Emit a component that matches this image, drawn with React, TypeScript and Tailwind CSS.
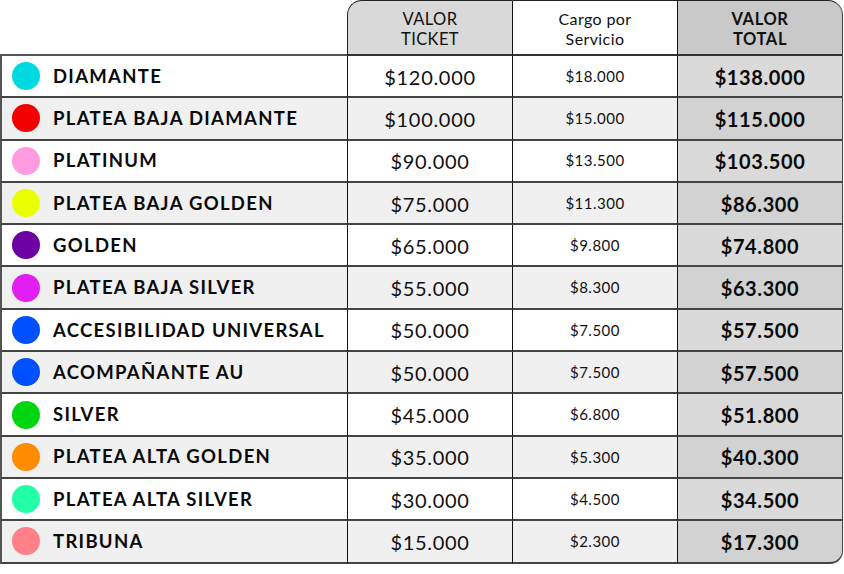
// Ticket price table: sector, base price, service charge and total.
const ROWS = [
  { name: "DIAMANTE", color: "#00d9e2", ticket: "$120.000", fee: "$18.000", total: "$138.000" },
  { name: "PLATEA BAJA DIAMANTE", color: "#f20000", ticket: "$100.000", fee: "$15.000", total: "$115.000" },
  { name: "PLATINUM", color: "#ff9be0", ticket: "$90.000", fee: "$13.500", total: "$103.500" },
  { name: "PLATEA BAJA GOLDEN", color: "#eaff00", ticket: "$75.000", fee: "$11.300", total: "$86.300" },
  { name: "GOLDEN", color: "#6c00a3", ticket: "$65.000", fee: "$9.800", total: "$74.800" },
  { name: "PLATEA BAJA SILVER", color: "#e21ef0", ticket: "$55.000", fee: "$8.300", total: "$63.300" },
  { name: "ACCESIBILIDAD UNIVERSAL", color: "#0050ff", ticket: "$50.000", fee: "$7.500", total: "$57.500" },
  { name: "ACOMPAÑANTE AU", color: "#0050ff", ticket: "$50.000", fee: "$7.500", total: "$57.500" },
  { name: "SILVER", color: "#00d60f", ticket: "$45.000", fee: "$6.800", total: "$51.800" },
  { name: "PLATEA ALTA GOLDEN", color: "#ff8c00", ticket: "$35.000", fee: "$5.300", total: "$40.300" },
  { name: "PLATEA ALTA SILVER", color: "#22ffa6", ticket: "$30.000", fee: "$4.500", total: "$34.500" },
  { name: "TRIBUNA", color: "#ff8088", ticket: "$15.000", fee: "$2.300", total: "$17.300" },
];

export default function App() {
  return (
    <div className="w-[844px] h-[574px] bg-white text-black font-['Lato',sans-serif]">
      <div className="grid grid-cols-[347px_166px_165px_165px]">
        {/* header */}
        <div className="h-[56px]" />
        <div className="h-[56px] flex flex-col items-center justify-center bg-[#d9d9d9] border-l-[1.5px] border-t-[1.5px] border-b-2 border-r-[1.5px] border-l-[#222] border-t-[#222] border-r-[#111] border-b-[#333] rounded-tl-[15px] text-[16.5px] leading-[20px] tracking-[0.4px] pt-[2px] text-[#111]">
          <span>VALOR</span>
          <span>TICKET</span>
        </div>
        <div className="h-[56px] flex flex-col items-center justify-center bg-white border-t-[1.5px] border-b-2 border-r-[1.5px] border-t-[#222] border-r-[#111] border-b-[#333] text-[16px] leading-[20px] tracking-[0.4px] pt-[2px] text-[#111]">
          <span>Cargo por</span>
          <span>Servicio</span>
        </div>
        <div className="h-[56px] flex flex-col items-center justify-center bg-[#c9c9c9] border-t-[1.5px] border-b-2 border-r-[1.5px] border-t-[#222] border-r-[#444] border-b-[#333] rounded-tr-[15px] text-[16.5px] leading-[20px] font-bold tracking-[0.6px] pt-[2px] text-[#111]">
          <span>VALOR</span>
          <span>TOTAL</span>
        </div>

        {/* body */}
        {ROWS.map((r, i) => {
          const alt = i % 2 === 1;
          const last = i === ROWS.length - 1;
          const bg = alt ? "bg-[#f0f0f0]" : "bg-white";
          const rowH = "h-[42.3px]";
          return [
            <div
              key={r.name + "-n"}
              className={`${rowH} ${bg} flex items-center gap-[13px] pl-[10px] border-l-2 border-b-2 border-l-[#555] border-b-[#444] ${i === 0 ? "border-t-2 border-t-[#555] -mt-[2px] h-[44.3px]" : ""}`}
            >
              <span className="w-[28px] h-[28px] rounded-full shrink-0" style={{ backgroundColor: r.color }} />
              <span className="text-[18.5px] font-bold tracking-[1.3px] text-[#0a0a0a] pt-[1px]">{r.name}</span>
            </div>,
            <div
              key={r.name + "-t"}
              className={`${rowH} ${bg} flex items-center justify-center border-l-[1.5px] border-r-[1.5px] border-b-2 border-l-[#111] border-r-[#111] border-b-[#444] text-[20px] tracking-[0.7px] text-[#111] pt-[1px]`}
            >
              {r.ticket}
            </div>,
            <div
              key={r.name + "-f"}
              className={`${rowH} ${bg} flex items-center justify-center border-r-[1.5px] border-b-2 border-r-[#111] border-b-[#444] text-[15px] tracking-[0.5px] text-[#111]`}
            >
              {r.fee}
            </div>,
            <div
              key={r.name + "-v"}
              className={`${rowH} ${alt ? "bg-[#d2d2d2]" : "bg-[#dadada]"} flex items-center justify-center border-r-[1.5px] border-b-2 border-r-[#444] border-b-[#444] text-[20px] font-bold tracking-[0.6px] text-[#0a0a0a] pt-[1px] ${last ? "rounded-br-[13px]" : ""}`}
            >
              {r.total}
            </div>,
          ];
        })}
      </div>
    </div>
  );
}
